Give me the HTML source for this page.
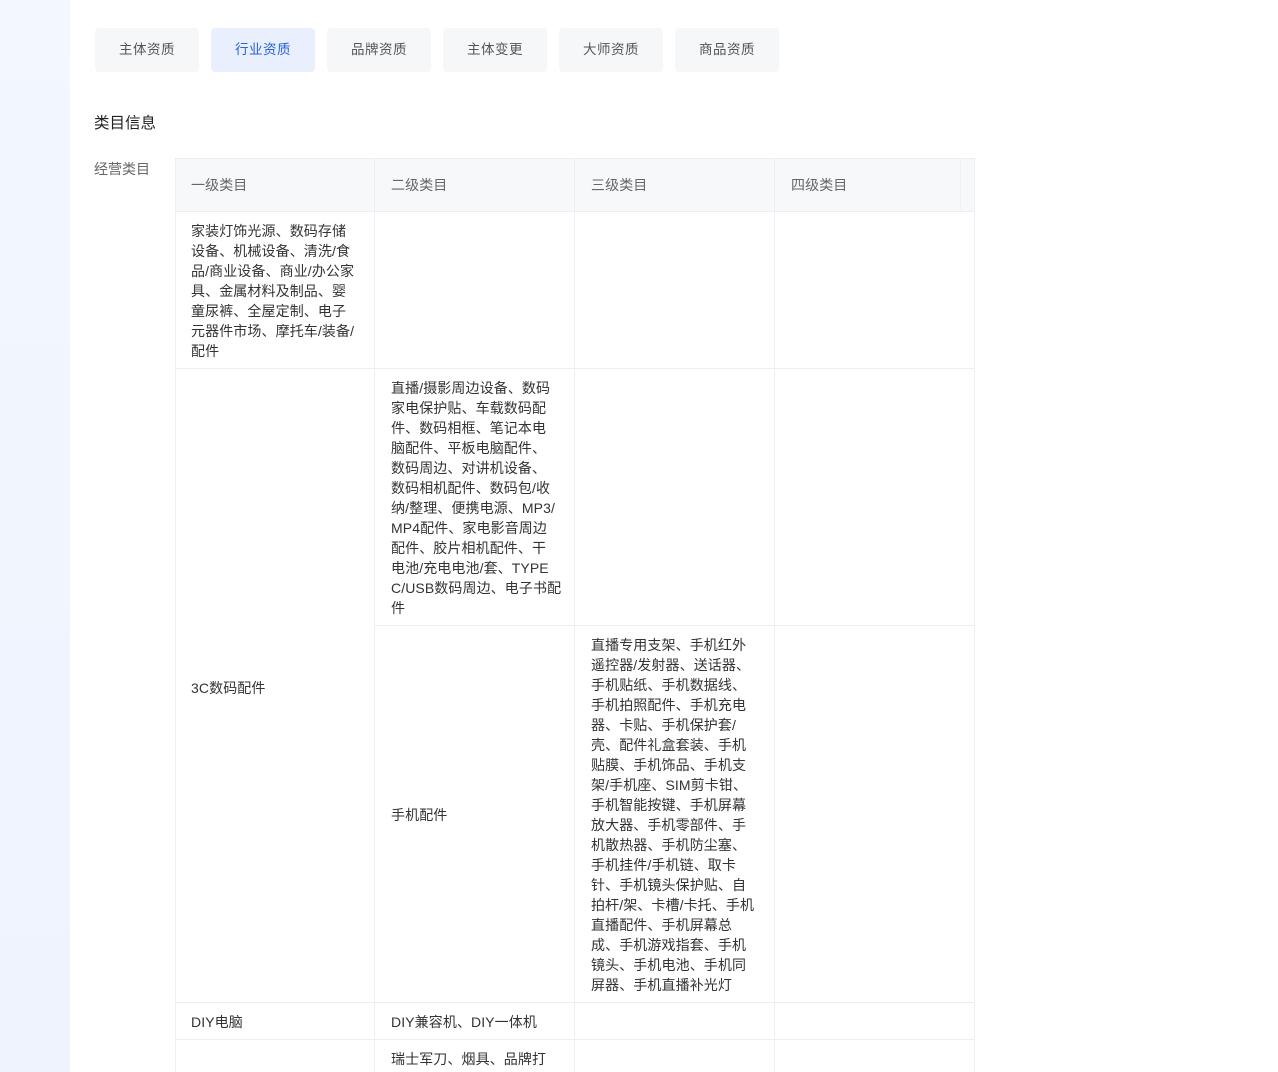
<!DOCTYPE html>
<html><head><meta charset="utf-8"><style>
*{margin:0;padding:0;box-sizing:border-box}
body{width:1278px;height:1072px;overflow:hidden;background:#fff;font-family:"Liberation Sans","Noto Sans CJK SC",sans-serif;font-size:13px;color:#333;position:relative}
.side{position:absolute;left:0;top:0;width:70px;height:1072px;background:linear-gradient(180deg,#f3f7ff,#eef3fd)}
.tab{position:absolute;top:28px;width:104px;height:44px;border-radius:4px;background:#f6f7f9;color:#555;line-height:44px;text-align:center;font-size:13.5px;letter-spacing:0.5px}
.tab.on{background:#e9effc;color:#2a64d8}
.a{position:absolute}
.t{position:absolute;line-height:20px;font-size:14px;color:#333;letter-spacing:0.1px;white-space:nowrap}
.h{position:absolute;background:#ebeef2;height:1px}
.v{position:absolute;background:#ebeef2;width:1px}
</style></head><body>
<div class="side"></div>
<div class="tab" style="left:95px">主体资质</div>
<div class="tab on" style="left:211px">行业资质</div>
<div class="tab" style="left:327px">品牌资质</div>
<div class="tab" style="left:443px">主体变更</div>
<div class="tab" style="left:559px">大师资质</div>
<div class="tab" style="left:675px">商品资质</div>
<div class="a" style="left:94px;top:114px;font-size:15.5px;color:#222;line-height:20px">类目信息</div>
<div class="a" style="left:94px;top:159px;color:#666;line-height:20px;font-size:14px">经营类目</div>
<div class="a" style="left:175px;top:158px;width:800px;height:53px;background:#f7f8fa"></div>
<div class="t" style="left:191px;top:175px;color:#666">一级类目</div>
<div class="t" style="left:391px;top:175px;color:#666">二级类目</div>
<div class="t" style="left:591px;top:175px;color:#666">三级类目</div>
<div class="t" style="left:791px;top:175px;color:#666">四级类目</div>
<div class="h" style="left:175px;top:158px;width:800px"></div>
<div class="h" style="left:175px;top:211px;width:800px"></div>
<div class="h" style="left:175px;top:368px;width:800px"></div>
<div class="h" style="left:374px;top:625px;width:601px"></div>
<div class="h" style="left:175px;top:1002px;width:800px"></div>
<div class="h" style="left:175px;top:1039px;width:800px"></div>
<div class="v" style="left:175px;top:158px;height:914px"></div>
<div class="v" style="left:374px;top:158px;height:914px"></div>
<div class="v" style="left:574px;top:158px;height:914px"></div>
<div class="v" style="left:774px;top:158px;height:914px"></div>
<div class="v" style="left:974px;top:158px;height:914px"></div>
<div class="v" style="left:960px;top:158px;height:53px;background:#f0f2f5"></div>
<div class="t" style="left:191px;top:221px">家装灯饰光源、数码存储<br>设备、机械设备、清洗/食<br>品/商业设备、商业/办公家<br>具、金属材料及制品、婴<br>童尿裤、全屋定制、电子<br>元器件市场、摩托车/装备/<br>配件</div>
<div class="t" style="left:391px;top:378px">直播/摄影周边设备、数码<br>家电保护贴、车载数码配<br>件、数码相框、笔记本电<br>脑配件、平板电脑配件、<br>数码周边、对讲机设备、<br>数码相机配件、数码包/收<br>纳/整理、便携电源、MP3/<br>MP4配件、家电影音周边<br>配件、胶片相机配件、干<br>电池/充电电池/套、TYPE<br>C/USB数码周边、电子书配<br>件</div>
<div class="t" style="left:191px;top:678px">3C数码配件</div>
<div class="t" style="left:391px;top:805px">手机配件</div>
<div class="t" style="left:591px;top:635px">直播专用支架、手机红外<br>遥控器/发射器、送话器、<br>手机贴纸、手机数据线、<br>手机拍照配件、手机充电<br>器、卡贴、手机保护套/<br>壳、配件礼盒套装、手机<br>贴膜、手机饰品、手机支<br>架/手机座、SIM剪卡钳、<br>手机智能按键、手机屏幕<br>放大器、手机零部件、手<br>机散热器、手机防尘塞、<br>手机挂件/手机链、取卡<br>针、手机镜头保护贴、自<br>拍杆/架、卡槽/卡托、手机<br>直播配件、手机屏幕总<br>成、手机游戏指套、手机<br>镜头、手机电池、手机同<br>屏器、手机直播补光灯</div>
<div class="t" style="left:191px;top:1012px">DIY电脑</div>
<div class="t" style="left:391px;top:1012px">DIY兼容机、DIY一体机</div>
<div class="t" style="left:391px;top:1049px">瑞士军刀、烟具、品牌打</div>
</body></html>
